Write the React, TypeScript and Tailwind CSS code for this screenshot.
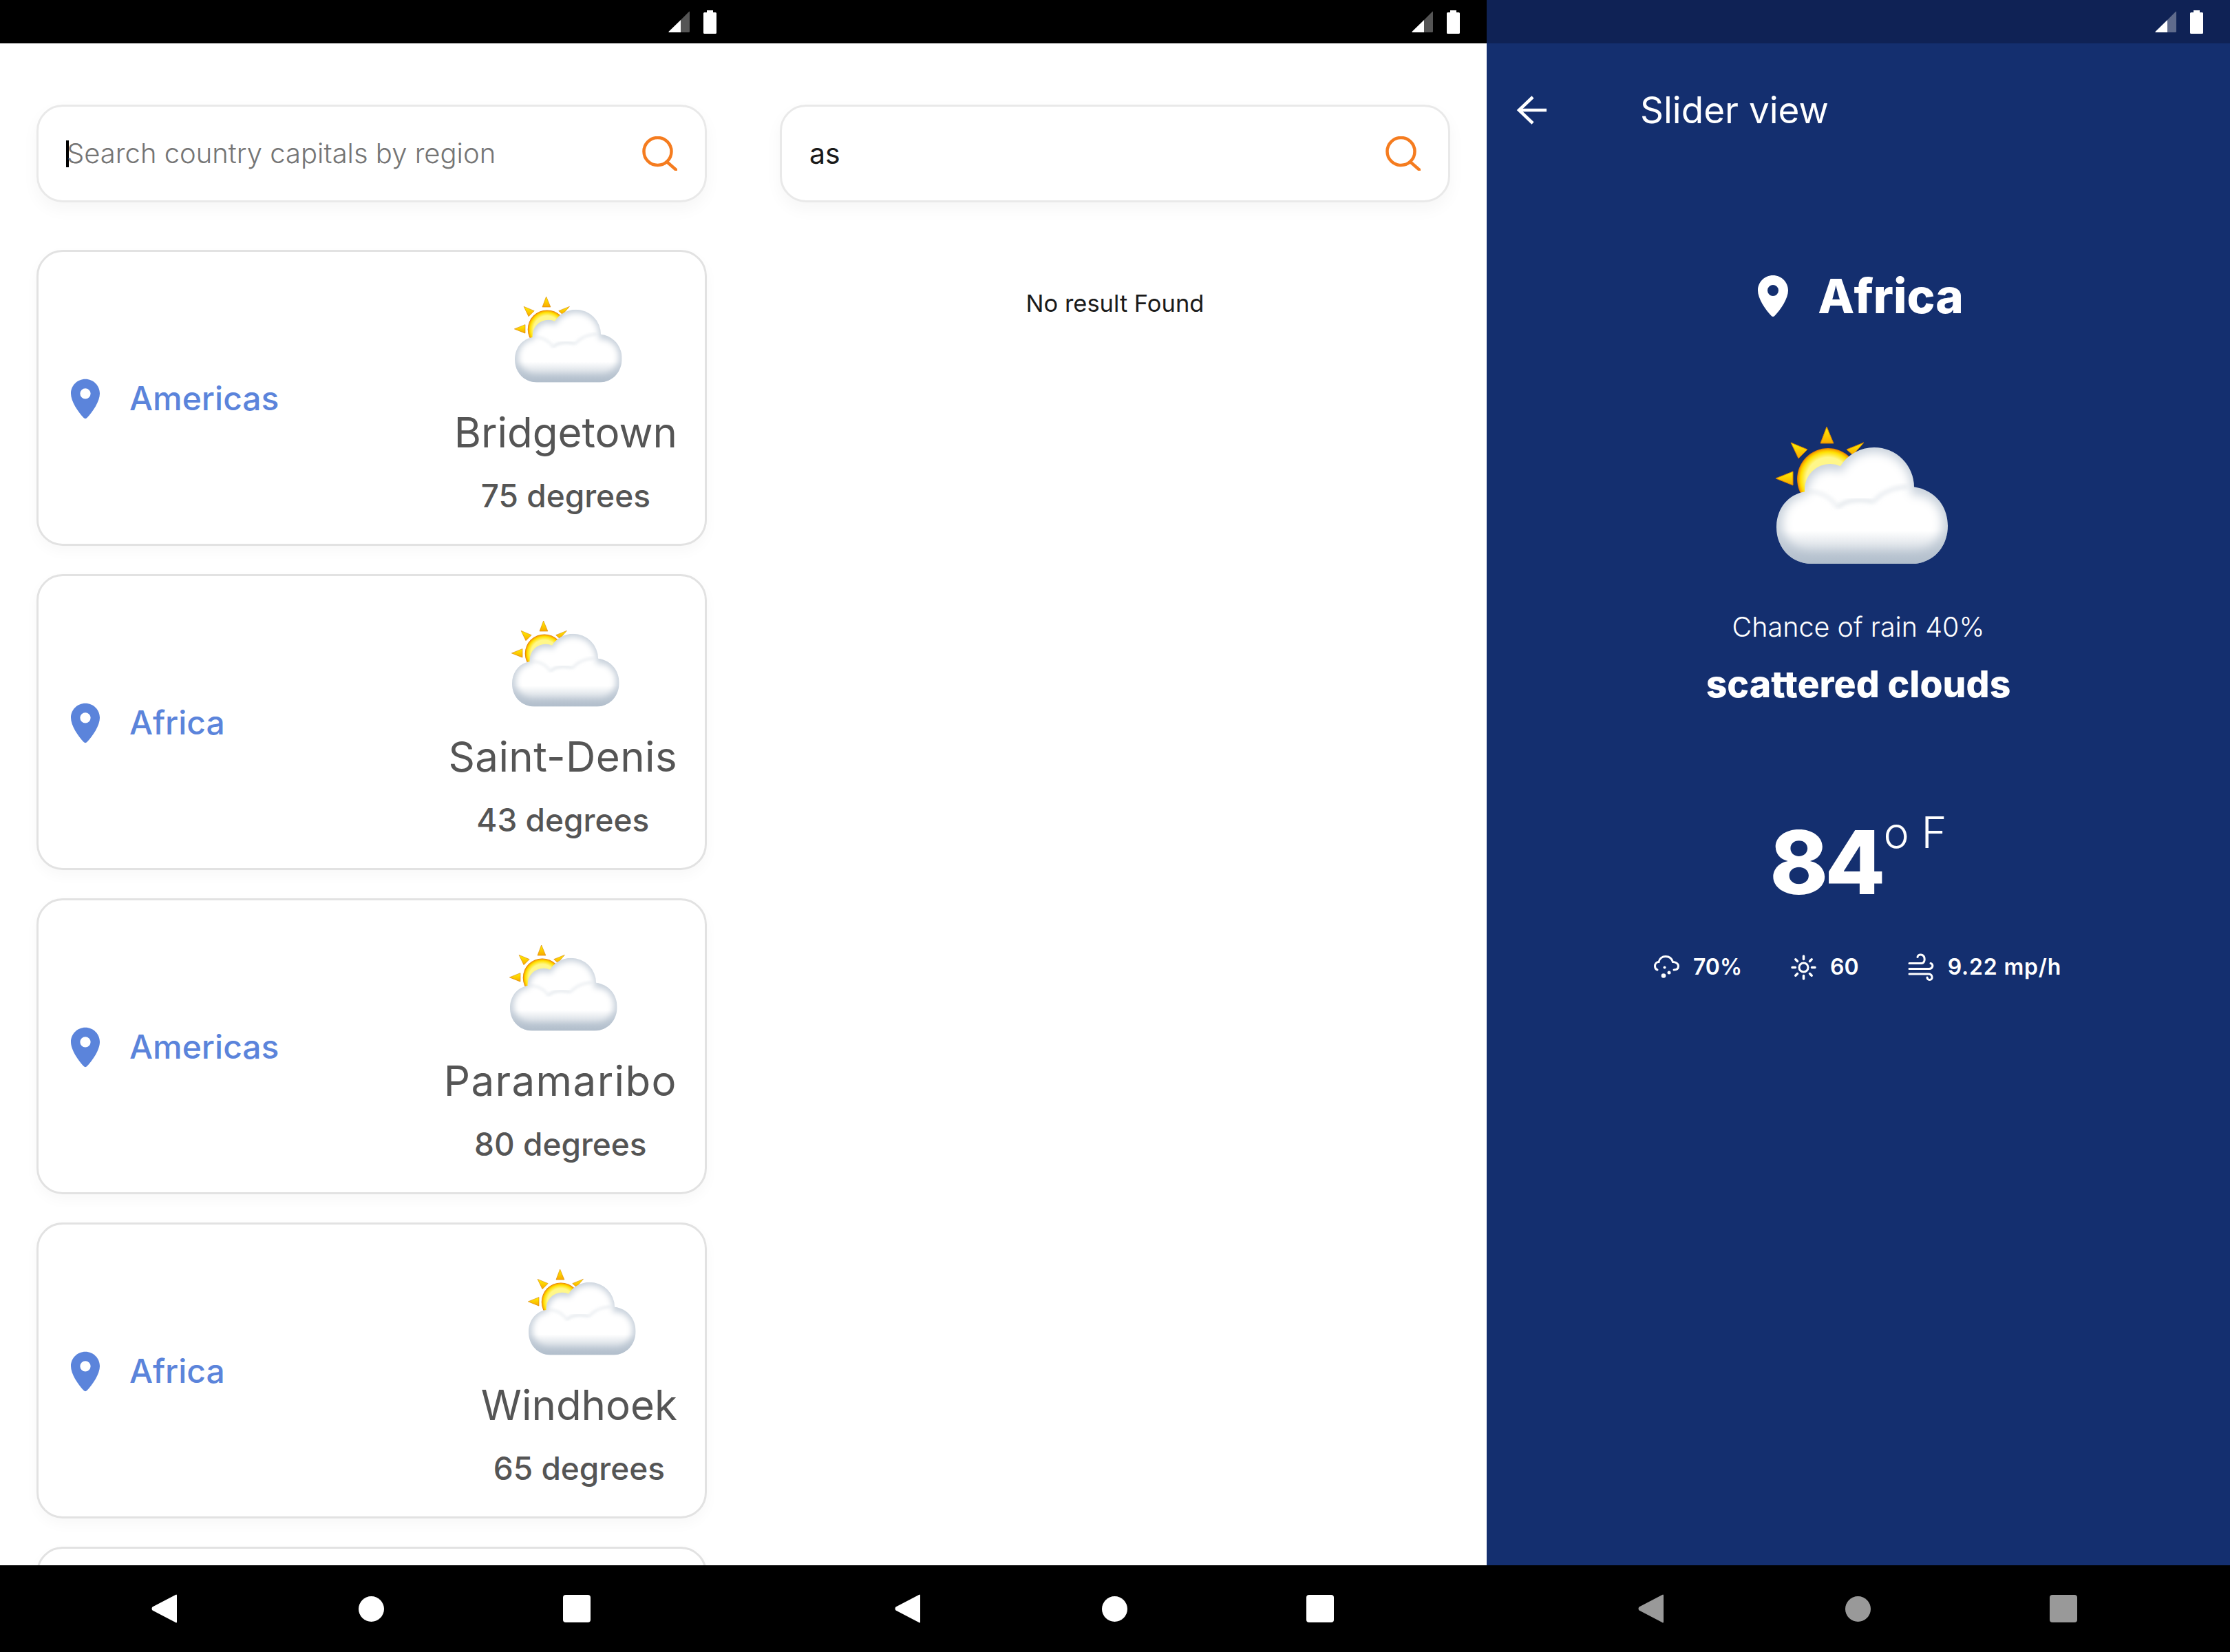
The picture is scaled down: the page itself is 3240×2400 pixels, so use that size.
import React from "react";

const Pin = ({ className, fill }: { className: string; fill: string }) => (
  <svg viewBox="0 0 44 60" className={className}>
    <path
      fillRule="evenodd"
      fill={fill}
      d="M22 0C9.8 0 0 9.8 0 22c0 6 2.6 12.400 6.500 19.500C10.600 48.500 15.500 54.500 19.500 58.800c1.400 1.600 3.600 1.600 5 0C28.500 54.500 33.400 48.500 37.500 41.500 41.400 34.400 44 28 44 22 44 9.800 34.200 0 22 0zM22 14a8 8 0 1 1 0 16 8 8 0 0 1 0-16z"
    />
  </svg>
);

const SearchIcon = () => (
  <svg viewBox="0 0 51 50" className="w-[51px] h-[50px] shrink-0" fill="none" stroke="#f57c1f" strokeWidth="4.500">
    <circle cx="22.500" cy="22" r="20" />
    <path d="M37 38 L49.500 49" strokeLinecap="round" />
  </svg>
);

const Weather = ({ className }: { className: string }) => (
  <svg viewBox="60 19 250 200" className={className}>
    <defs>
      <linearGradient id="wRay" x1="0" y1="0" x2="0" y2="1">
        <stop offset="0" stopColor="#fff200" />
        <stop offset="1" stopColor="#f9a800" />
      </linearGradient>
      <radialGradient id="wSun" cx="0.5" cy="0.5" r="0.5">
        <stop offset="0.7" stopColor="#fff78a" />
        <stop offset="0.88" stopColor="#ffe000" />
        <stop offset="0.96" stopColor="#f7a600" />
        <stop offset="1" stopColor="#d97000" />
      </radialGradient>
      <linearGradient id="wShade" x1="0" y1="0" x2="0" y2="1">
        <stop offset="0" stopColor="#aebbc9" stopOpacity="0" />
        <stop offset="1" stopColor="#aebbc9" stopOpacity="0.9" />
      </linearGradient>
      <clipPath id="wCloud" clipPathUnits="userSpaceOnUse">
        <circle cx="203" cy="107" r="58" />
        <ellipse cx="139" cy="110" rx="37" ry="37" />
        <path d="M110 113 C82 113 61 135 61 165 C61 196 84 218 112 218 L258 218 C288 218 310 194 310 163 C310 132 288 106 252 106 C228 106 210 118 200 126 L140 126 C132 117 122 113 110 113Z" />
      </clipPath>
      <filter id="wBlur" x="-20%" y="-20%" width="140%" height="140%">
        <feGaussianBlur stdDeviation="7" />
      </filter>
      <filter id="wBlur2" x="-20%" y="-20%" width="140%" height="140%">
        <feGaussianBlur stdDeviation="3" />
      </filter>
    </defs>
    <polygon points="134,19 125,43 144,43" fill="url(#wRay)" stroke="#d98200" strokeWidth="1" />
    <polygon points="82,42 106,52 93,65" fill="url(#wRay)" stroke="#d98200" strokeWidth="1" />
    <polygon points="188,42 163,52 172,60" fill="url(#wRay)" stroke="#d98200" strokeWidth="1" />
    <polygon points="60,94 85,84 85,104" fill="url(#wRay)" stroke="#d98200" strokeWidth="1" />
    <circle cx="136" cy="95" r="45" fill="url(#wSun)" />
    <g clipPath="url(#wCloud)">
      <rect x="50" y="40" width="270" height="190" fill="#c9d2dc" />
      <g filter="url(#wBlur)" fill="#ffffff">
        <circle cx="203" cy="110" r="54" />
        <circle cx="139" cy="114" r="33" />
        <rect x="70" y="118" width="232" height="82" rx="40" />
      </g>
      <rect x="50" y="170" width="270" height="50" fill="url(#wShade)" />
      <path d="M150 136 C162 124 184 124 202 128" fill="none" stroke="#ccd4dd" strokeWidth="3" filter="url(#wBlur2)" />
      <path d="M202 128 C215 113 232 107 252 106" fill="none" stroke="#d6dde4" strokeWidth="3" filter="url(#wBlur2)" />
      <path d="M102 113 C122 112 138 118 150 136" fill="none" stroke="#e0e5ea" strokeWidth="3" filter="url(#wBlur2)" />
    </g>
  </svg>
);

const Signal = ({ dim }: { dim: string }) => (
  <svg viewBox="0 0 31 31" className="w-[31px] h-[31px]">
    <path d="M18 13 L0.500 30 Q0 31 1 31 H18Z" fill="#fff" />
    <path d="M18 13 L30 1 Q31 0 31 1.500 V29.500 Q31 31 29.500 31 H18Z" fill={dim} />
  </svg>
);

const Battery = () => (
  <svg viewBox="0 0 19 34" className="w-[19px] h-[34px]">
    <path d="M5 0H14V3H17.500Q19 3 19 4.500V32.500Q19 34 17.500 34H1.500Q0 34 0 32.500V4.500Q0 3 1.500 3H5Z" fill="#fff" />
  </svg>
);

const StatusBar = ({ bg, dim }: { bg: string; dim: string }) => (
  <div className={`h-[63px] shrink-0 flex items-center justify-end gap-[20px] pr-[39px] ${bg}`}>
    <Signal dim={dim} />
    <Battery />
  </div>
);

const NavBar = ({ color }: { color: string }) => (
  <div className="h-[126px] shrink-0 bg-black flex items-center pl-[220px]">
    <svg viewBox="0 0 37 42" className="w-[37px] h-[42px]">
      <path d="M35 1 Q37 -0.500 37 2 V40 Q37 42.500 35 41 L1.500 23.500 Q-0.500 21 1.500 18.500Z" fill={color} />
    </svg>
    <div className="w-[37px] h-[37px] rounded-full ml-[264px]" style={{ background: color }} />
    <div className="w-[40px] h-[40px] rounded-[4px] ml-[260px]" style={{ background: color }} />
  </div>
);

const SearchBox = ({ children }: { children: React.ReactNode }) => (
  <div className="h-[142px] shrink-0 rounded-[38px] border-[3px] border-[#e9e9e9] bg-white shadow-[0_10px_24px_rgba(0,0,0,0.04)] flex items-center justify-between pr-[40px]">
    {children}
  </div>
);

const cards = [
  { region: "Americas", city: "Bridgetown", deg: "75 degrees", track: "" },
  { region: "Africa", city: "Saint-Denis", deg: "43 degrees", track: "tracking-[0.4px]" },
  { region: "Americas", city: "Paramaribo", deg: "80 degrees", track: "tracking-[1.4px]" },
  { region: "Africa", city: "Windhoek", deg: "65 degrees", track: "" },
];

const cardShell =
  "shrink-0 rounded-[38px] border-[3px] border-[#e2e2e2] bg-white shadow-[0_8px_20px_rgba(0,0,0,0.03)]";

const Card = ({ region, city, deg, track }: { region: string; city: string; deg: string; track: string }) => (
  <div className={`h-[430px] flex items-start justify-between pl-[47px] pr-[40px] ${cardShell}`}>
    <div className="h-full flex items-center gap-[44px] pt-[2px]">
      <Pin className="w-[42px] h-[59px] shrink-0" fill="#5b84db" />
      <span className="-ml-[1px] text-[48px] leading-[60px] font-medium text-[#5b84db]">{region}</span>
    </div>
    <div className="flex flex-col items-center pt-[65px]">
      <Weather className="w-[157px] h-[125px] ml-[8px]" />
      <span className={`mt-[32px] text-[60px] leading-[80px] text-[#555555] ${track}`}>{city}</span>
      <span className="mt-[20px] text-[46px] leading-[64px] font-medium text-[#555555]">{deg}</span>
    </div>
  </div>
);

const Stat = ({ icon, text, track }: { icon: React.ReactNode; text: string; track?: string }) => (
  <div className="flex items-center gap-[20px]">
    {icon}
    <span className={`text-[32px] leading-[44px] font-semibold text-white ${track ?? ""}`}>{text}</span>
  </div>
);

const CloudRain = () => (
  <svg viewBox="0 0 37 34" className="w-[37px] h-[34px]" fill="none" stroke="#fff" strokeWidth="3" strokeLinecap="round">
    <path d="M5 21 C2 20 1.500 17.500 1.500 15.500 C1.500 12 4 9.500 7 9.500 C8 4.500 12 1.500 17 1.500 C22 1.500 26 4.500 27.500 9.500 C31 9.500 35.500 11.500 35.500 15.500 C35.500 19 33 21 29 21" />
    <circle cx="15.500" cy="17.500" r="2" fill="#fff" stroke="none" />
    <circle cx="22" cy="25" r="2.500" fill="#fff" stroke="none" />
    <circle cx="14" cy="29.500" r="3.300" fill="#fff" stroke="none" />
  </svg>
);

const Sun = () => (
  <svg viewBox="0 0 37 37" className="w-[37px] h-[37px]" fill="none" stroke="#fff" strokeWidth="3" strokeLinecap="round">
    <circle cx="18.500" cy="18.500" r="6.500" />
    <g strokeWidth="3.500">
      <path d="M18.500 2V6.500M18.500 30.500V35M2 18.500H6.500M30.500 18.500H35" />
      <path d="M6.800 6.800L9.500 9.500M27.500 27.500L30.200 30.200M30.200 6.800L27.500 9.500M9.500 27.500L6.800 30.200" />
    </g>
  </svg>
);

const Wind = () => (
  <svg viewBox="0 0 38 40" className="w-[38px] h-[40px]" fill="none" stroke="#fff" strokeWidth="3" strokeLinecap="round">
    <path d="M2 14.500H20C25.500 14.500 26 3 19 2C16 1.700 14 3.500 14 5.500" />
    <path d="M2 22.500H31C36.500 22.500 37.500 15.500 33 14.500" />
    <path d="M2 30H30C36 30 37 38.500 31.500 38.500C29 38.500 28 36.500 28 35" />
  </svg>
);

export default function App() {
  return (
    <div className="w-[3240px] h-[2400px] flex overflow-hidden font-['Inter',sans-serif]">
      {/* Phone 1 */}
      <div className="w-[1080px] h-full flex flex-col bg-white">
        <StatusBar bg="bg-black" dim="#555555" />
        <div className="flex-1 min-h-0 overflow-hidden px-[53px] pt-[89px] flex flex-col">
          <SearchBox>
            <div className="flex items-center pl-[40px]">
              <span className="w-[4px] h-[39px] bg-black shrink-0" />
              <span className="-ml-[3px] text-[40px] leading-[56px] font-light text-[#757575]">Search country capitals by region</span>
            </div>
            <SearchIcon />
          </SearchBox>
          <div className="mt-[69px] flex flex-col gap-[41px]">
            {cards.map((c, i) => (
              <Card key={i} {...c} />
            ))}
            <div className={`h-[430px] ${cardShell}`} />
          </div>
        </div>
        <NavBar color="#ffffff" />
      </div>

      {/* Phone 2 */}
      <div className="w-[1080px] h-full flex flex-col bg-white">
        <StatusBar bg="bg-black" dim="#555555" />
        <div className="flex-1 min-h-0 overflow-hidden px-[53px] pt-[89px] flex flex-col">
          <SearchBox>
            <span className="pl-[40px] text-[41px] leading-[56px] text-[#1a1a1a]">as</span>
            <SearchIcon />
          </SearchBox>
          <div className="mt-[125px] text-center text-[34.5px] leading-[44px] text-[#1a1a1a]">No result Found</div>
        </div>
        <NavBar color="#ffffff" />
      </div>

      {/* Phone 3 */}
      <div className="w-[1080px] h-full flex flex-col bg-[#142f6f]">
        <StatusBar bg="bg-[#0f2255]" dim="#5f6b8c" />
        <div className="flex-1 min-h-0 overflow-hidden flex flex-col">
          <div className="flex items-center pl-[43px] pt-[65px]">
            <svg viewBox="0 0 44 42" className="w-[44px] h-[42px] shrink-0" fill="none" stroke="#fff" strokeWidth="4.500">
              <path d="M44 21H4" />
              <path d="M24 2L4 21L24 40" />
            </svg>
            <span className="ml-[136px] text-[53px] leading-[64px] text-white">Slider view</span>
          </div>
          <div className="mt-[198px] flex items-center justify-center gap-[43px] pl-[7px]">
            <Pin className="w-[44px] h-[60px] shrink-0" fill="#ffffff" />
            <span className="text-[69px] leading-[80px] font-extrabold text-white">Africa</span>
          </div>
          <div className="mt-[150px] flex justify-center pl-[10px]">
            <Weather className="w-[250px] h-[200px]" />
          </div>
          <div className="mt-[66px] text-center text-[39.5px] leading-[50px] font-light text-white">Chance of rain 40%</div>
          <div className="mt-[24px] text-center text-[53.5px] leading-[68px] font-extrabold text-white">scattered clouds</div>
          <div className="mt-[155px] flex items-start justify-center">
            <span className="text-[128px] leading-[140px] font-extrabold tracking-[-5px] text-white">84</span>
            <span className="text-[63px] leading-[70px] font-light text-white ml-[2px] -mt-[9px]">o F</span>
          </div>
          <div className="mt-[60px] flex items-center justify-center gap-[71px] pr-[2px]">
            <Stat icon={<CloudRain />} text="70%" />
            <Stat icon={<Sun />} text="60" />
            <Stat icon={<Wind />} text="9.22 mp/h" track="tracking-[0.8px]" />
          </div>
        </div>
        <NavBar color="#999999" />
      </div>
    </div>
  );
}
